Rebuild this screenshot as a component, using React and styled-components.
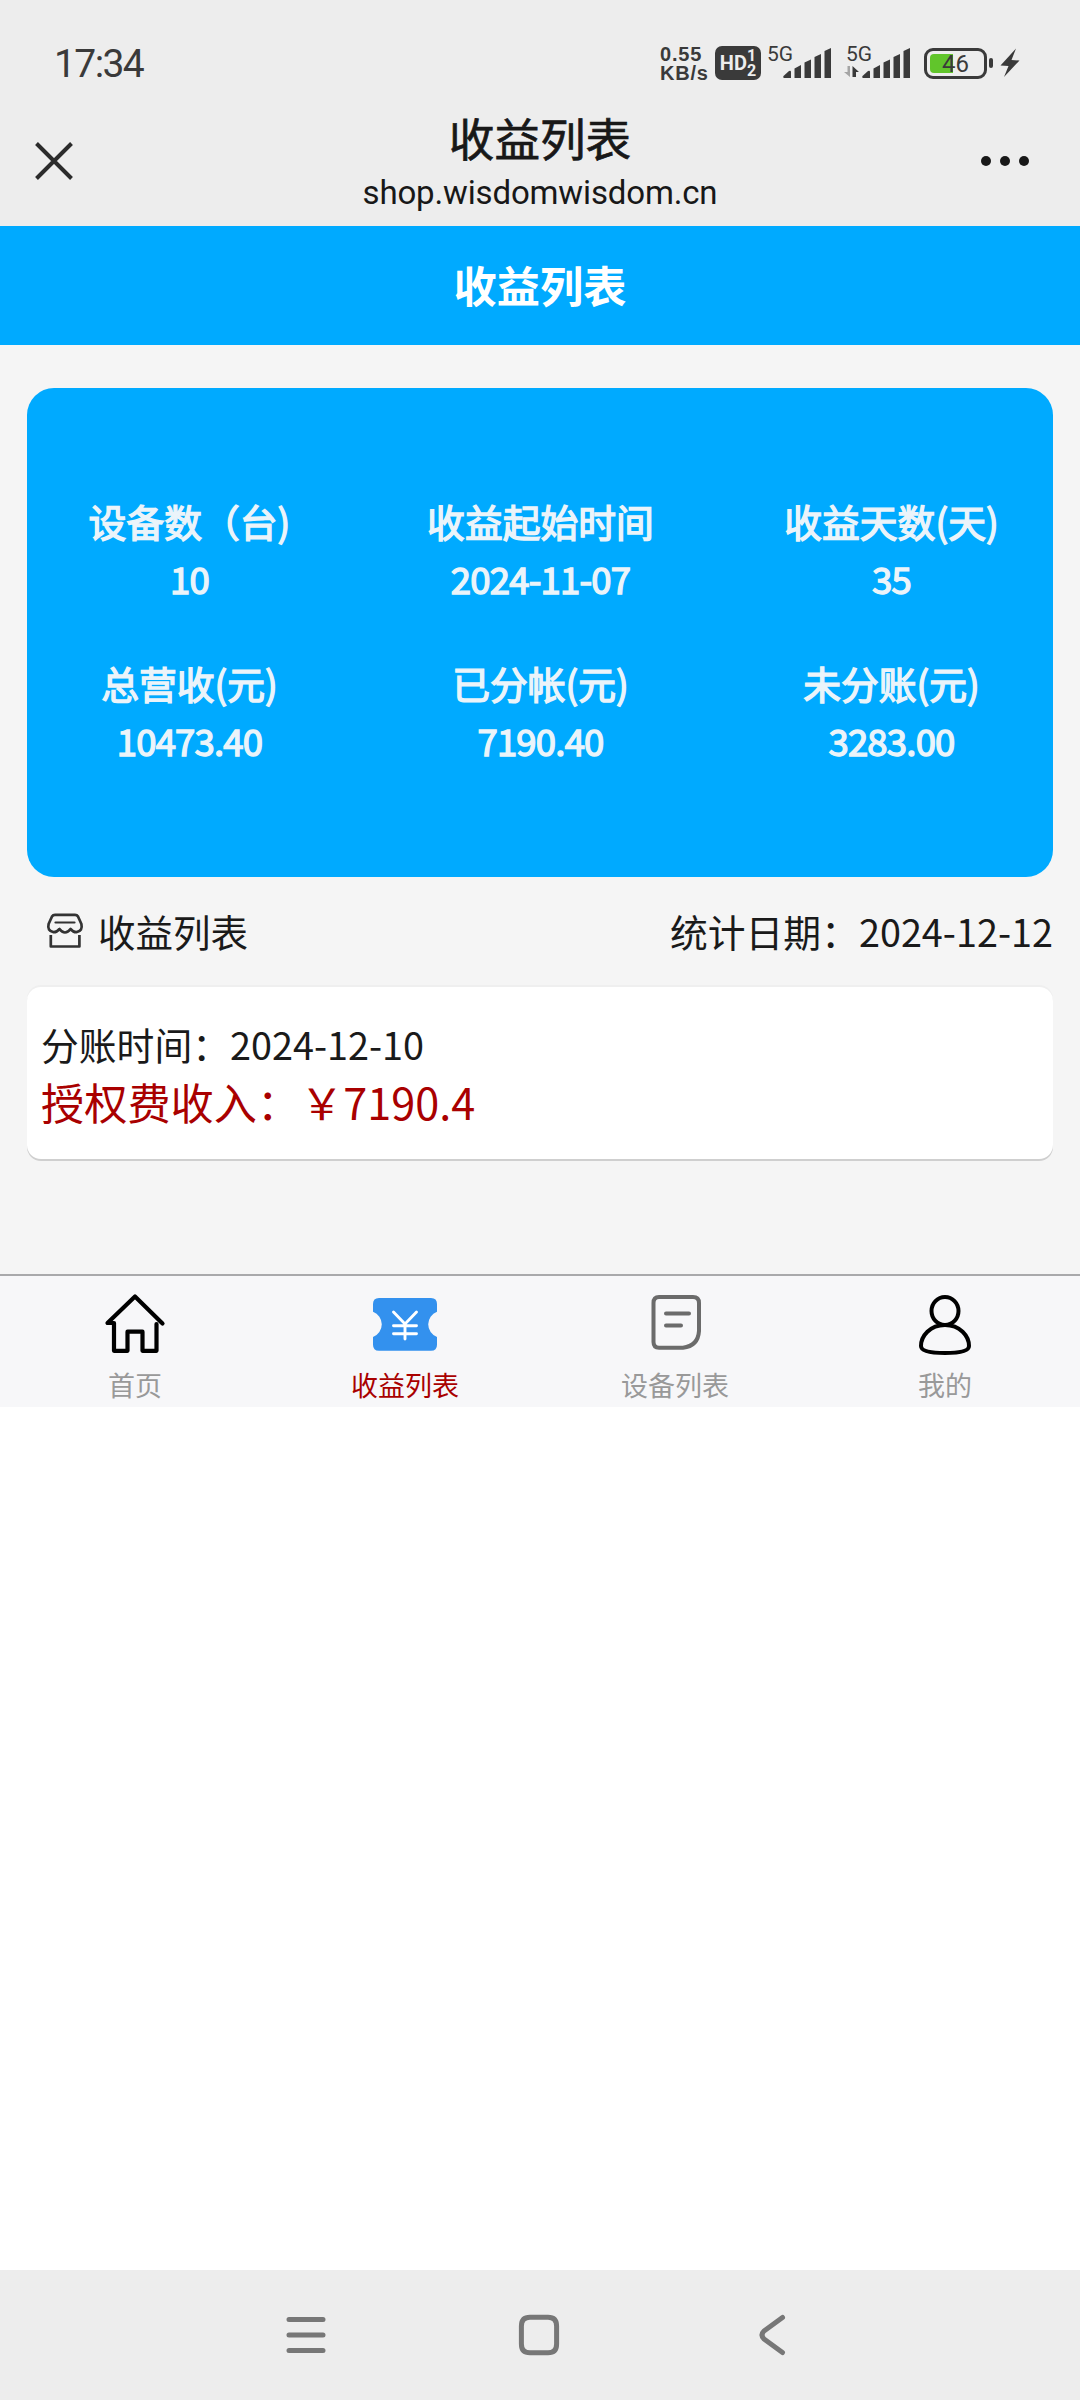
import styled, { createGlobalStyle, css } from 'styled-components';

const STATS = [
  { label: '设备数（台)', value: '10' },
  { label: '收益起始时间', value: '2024-11-07' },
  { label: '收益天数(天)', value: '35' },
  { label: '总营收(元)', value: '10473.40' },
  { label: '已分帐(元)', value: '7190.40' },
  { label: '未分账(元)', value: '3283.00' },
];

const RECORDS = [{ date: '2024-12-10', amount: '7190.4' }];

const TABS = [
  { name: '首页', Icon: HomeIcon },
  { name: '收益列表', Icon: TicketIcon, active: true },
  { name: '设备列表', Icon: DocIcon },
  { name: '我的', Icon: UserIcon },
];

function App() {
  return (
    <StPhone>
      <GlobalStyle />
      <StStatusBar>
        <StClock>17:34</StClock>
        <StStatusIcons>
          <StSpeed>
            <span>0.55</span>
            <span>KB/s</span>
          </StSpeed>
          <StHdBadge>
            HD
            <StHdNumbers>
              <span>1</span>
              <span>2</span>
            </StHdNumbers>
          </StHdBadge>
          <StSignal $left={4}>
            <StNetwork>5G</StNetwork>
            <SignalBars />
          </StSignal>
          <StSignal $left={13}>
            <StNetwork>5G</StNetwork>
            <SignalBars arrows />
          </StSignal>
          <StBattery>
            <StBatteryLevel />
            <StBatteryText>46</StBatteryText>
          </StBattery>
          <StBatteryTip />
          <svg width="20" height="30" viewBox="0 0 20 30">
            <path d="M16 0.5 L0.5 17.5 L8.5 18 L4 29 L19.5 12.5 L11.5 12 Z" fill="#3a3a3a" />
          </svg>
        </StStatusIcons>
      </StStatusBar>

      <StTitleBar>
        <svg width="38" height="38" viewBox="0 0 38 38">
          <path d="M1.5 1.5 L36.5 36.5 M36.5 1.5 L1.5 36.5" stroke="#2b2b2b" strokeWidth="4" />
        </svg>
        <StTitleText>
          <StTitle>收益列表</StTitle>
          <StUrl>shop.wisdomwisdom.cn</StUrl>
        </StTitleText>
        <StMore>
          <i />
          <i />
          <i />
        </StMore>
      </StTitleBar>

      <StPage>
        <StPageHeader>收益列表</StPageHeader>
        <StSummary>
          {STATS.map(({ label, value }) => (
            <StStat key={label}>
              <StStatLabel>{label}</StStatLabel>
              <StStatValue>{value}</StStatValue>
            </StStat>
          ))}
        </StSummary>
        <StListHeader>
          <StListTitle>
            <ShopIcon />
            收益列表
          </StListTitle>
          <span>统计日期：2024-12-12</span>
        </StListHeader>
        {RECORDS.map(({ date, amount }) => (
          <StRecord key={date}>
            <StRecordDate>分账时间：{date}</StRecordDate>
            <StRecordAmount>授权费收入：￥{amount}</StRecordAmount>
          </StRecord>
        ))}
        <StTabBar>
          {TABS.map(({ name, Icon, active }) => (
            <StTab key={name} $active={active}>
              <Icon />
              <span>{name}</span>
            </StTab>
          ))}
        </StTabBar>
      </StPage>

      <StNavBar>
        <svg width="40" height="42" viewBox="0 0 40 42">
          <path d="M3 5.4 H37 M3 21 H37 M3 36.4 H37" {...navStroke} />
        </svg>
        <svg width="42" height="42" viewBox="0 0 42 42">
          <path
            d="M12 3.2 H30 Q38.6 3.2 38.6 12 V30 Q38.6 38.8 30 38.8 H12 Q3.4 38.8 3.4 30 V12 Q3.4 3.2 12 3.2 Z"
            {...navStroke}
          />
        </svg>
        <svg width="28" height="42" viewBox="0 0 28 42">
          <path d="M24.5 3.5 L6 17 Q2 21 6 25 L24.5 38.5" {...navStroke} />
        </svg>
      </StNavBar>
    </StPhone>
  );
}

export default App;

const navStroke = {
  fill: 'none',
  stroke: '#777777',
  strokeWidth: 5,
  strokeLinecap: 'round',
  strokeLinejoin: 'round',
};

function SignalBars({ arrows }) {
  return (
    <svg width="66" height="32" viewBox="0 0 66 32">
      {arrows && (
        <>
          <path d="M6 19 V30 L0 25 H3.5 V19 Z" fill="#a5a5a5" />
          <path d="M8.5 30 V19 L15 25 H12 V30 Z" fill="#3a3a3a" />
        </>
      )}
      <g fill="#3a3a3a">
        <path d="M18.5 29 L24 24 Q26 23 26 25 V31 H19 Q17.5 30.5 18.5 29 Z" />
        <path d="M29.5 21.5 L36 18 V31 H29.5 Z" />
        <path d="M39.5 15.5 L46 12.5 V31 H39.5 Z" />
        <path d="M49.5 10 L56 7 V31 H49.5 Z" />
        <path d="M59.5 4 L66 1 V31 H59.5 Z" />
      </g>
    </svg>
  );
}

function ShopIcon() {
  return (
    <svg width="38" height="36" viewBox="0 0 38 36" fill="none" stroke="#333" strokeWidth="2.7">
      <path
        d="M9 1.8 H29 Q31 1.8 32 3.5 L35.4 11 Q37 18 30.5 19.2 Q27.5 19.5 24.5 16 Q22 19.5 19 19.5 Q16 19.5 13.5 16 Q10.5 19.5 7.5 19.2 Q1 18 2.6 11 L6 3.5 Q7 1.8 9 1.8 Z"
        strokeLinejoin="round"
      />
      <path d="M9.5 9.5 H28.5" strokeLinecap="round" strokeWidth="2.2" />
      <path d="M4.8 22 V33.5 H33.4 V22" strokeLinejoin="round" />
    </svg>
  );
}

function HomeIcon() {
  return (
    <svg width="62" height="62" viewBox="0 0 62 62">
      <path
        d="M58.5 30.5 L31 3.5 L3.5 30 H10 V57.8 H23.5 V38.7 H38.5 V57.8 H52.5 V31"
        fill="none"
        stroke="#000"
        strokeWidth="4.2"
        strokeLinecap="round"
        strokeLinejoin="round"
      />
    </svg>
  );
}

function TicketIcon() {
  return (
    <svg width="64" height="62" viewBox="0 0 64 62">
      <path
        d="M6 5 H58 Q64 5 64 11 V18.7 A13.5 13.5 0 0 0 64 44 V51.7 Q64 57.7 58 57.7 H6 Q0 57.7 0 51.7 V44 A13.5 13.5 0 0 0 0 18.7 V11 Q0 5 6 5 Z"
        fill="#3391ee"
      />
      <path
        d="M20.5 19 L32 31 L43.5 19 M20.5 32.7 H43.5 M20.5 40.7 H43.5 M32 31 V46"
        fill="none"
        stroke="#fff"
        strokeWidth="2.9"
        strokeLinecap="round"
      />
    </svg>
  );
}

function DocIcon() {
  return (
    <svg width="52" height="62" viewBox="0 0 52 62" fill="none" stroke="#6b6b6b" strokeWidth="4" strokeLinecap="round">
      <path d="M10 4 H44 Q50 4 50 10 V38 Q49 53 34 54.7 H10 Q4.5 54.7 4.5 49 V10 Q4.5 4 10 4 Z" />
      <path d="M17 20.5 H40 M17 32.5 H32" />
    </svg>
  );
}

function UserIcon() {
  return (
    <svg width="54" height="62" viewBox="0 0 54 62" fill="none" stroke="#000" strokeWidth="4">
      <ellipse cx="27" cy="18" rx="13.5" ry="14" />
      <path d="M27 32 C42 32 51 43 51 53 Q51 60 27 60 Q3 60 3 53 C3 43 12 32 27 32 Z" />
    </svg>
  );
}

const GlobalStyle = createGlobalStyle`
  * {
    box-sizing: border-box;
  }
  body {
    margin: 0;
    background: #fff;
    font-family: 'Noto Sans CJK SC', sans-serif;
  }
  svg {
    display: block;
    flex-shrink: 0;
  }
`;

const systemFont = css`
  font-family: Roboto, 'Noto Sans CJK SC', sans-serif;
`;

const StPhone = styled.div`
  display: flex;
  flex-direction: column;
  width: 1080px;
  height: 2400px;
  overflow: hidden;
`;

const StStatusBar = styled.div`
  ${systemFont}
  display: flex;
  align-items: center;
  justify-content: space-between;
  height: 100px;
  padding: 26px 60px 0 54px;
  background: #ededed;
  color: #3a3a3a;
`;

const StClock = styled.span`
  padding-top: 2px;
  font-size: 39px;
  letter-spacing: -1.6px;
`;

const StStatusIcons = styled.div`
  display: flex;
  align-items: center;
`;

const StSpeed = styled.div`
  display: flex;
  flex-direction: column;
  width: 55px;
  padding-top: 2px;
  font-family: 'Liberation Sans', sans-serif;
  font-size: 20px;
  font-weight: 700;
  line-height: 19px;
  letter-spacing: 0.8px;
`;

const StHdBadge = styled.div`
  display: flex;
  align-items: center;
  justify-content: center;
  width: 46px;
  height: 34px;
  border-radius: 7px;
  background: #3a3a3a;
  color: #ededed;
  font-size: 20px;
  font-weight: 700;
`;

const StHdNumbers = styled.div`
  display: flex;
  flex-direction: column;
  font-size: 16px;
  line-height: 15px;
`;

const StSignal = styled.div`
  position: relative;
  margin-left: ${(props) => props.$left}px;
`;

const StNetwork = styled.span`
  position: absolute;
  top: -3px;
  left: 2px;
  font-size: 21px;
  line-height: 20px;
`;

const StBattery = styled.div`
  position: relative;
  width: 63px;
  height: 31px;
  margin-left: 14px;
  padding: 3px;
  border: 3px solid #3a3a3a;
  border-radius: 9px;
`;

const StBatteryLevel = styled.div`
  width: 23px;
  height: 19px;
  border-radius: 4px 0 0 4px;
  background: #61c52b;
`;

const StBatteryText = styled.span`
  position: absolute;
  inset: 0;
  font-size: 24px;
  line-height: 26px;
  text-align: center;
`;

const StBatteryTip = styled.div`
  width: 4px;
  height: 10px;
  margin: 0 7px 0 2px;
  border-radius: 2px;
  background: #3a3a3a;
`;

const StTitleBar = styled.div`
  display: grid;
  grid-template-columns: 1fr auto 1fr;
  align-items: center;
  height: 126px;
  padding: 0 51px 4px 35px;
  background: #ededed;
  color: #181818;
`;

const StTitleText = styled.div`
  display: flex;
  flex-direction: column;
  align-items: center;
  padding: 10px 0 0 16px;
`;

const StTitle = styled.div`
  font-size: 45.6px;
  line-height: 52px;
  -webkit-text-stroke: 0.7px #181818;
`;

const StUrl = styled.div`
  ${systemFont}
  padding-top: 2px;
  font-size: 33px;
  line-height: 56px;
  letter-spacing: -0.15px;
`;

const StMore = styled.div`
  display: flex;
  justify-content: flex-end;
  gap: 9px;
  i {
    width: 10px;
    height: 10px;
    border-radius: 50%;
    background: #181818;
  }
`;

const StPage = styled.main`
  display: flex;
  flex-direction: column;
  background: #f5f5f5;
`;

const StPageHeader = styled.h1`
  display: flex;
  align-items: center;
  justify-content: center;
  height: 119px;
  margin: 0;
  padding-bottom: 4px;
  background: #00aaff;
  color: #fff;
  font-size: 43.2px;
  font-weight: 700;
`;

const StSummary = styled.section`
  display: grid;
  grid-template-columns: 324px 378px 324px;
  grid-auto-rows: 162px;
  height: 489px;
  margin: 43px 27px 0;
  padding-top: 104px;
  border-radius: 27px;
  background: #00aaff;
  color: #ebf4fa;
`;

const StStat = styled.div`
  display: flex;
  flex-direction: column;
  align-items: center;
  font-size: 37.8px;
  line-height: 58px;
  -webkit-text-stroke: 1.4px #ebf4fa;
`;

const StStatLabel = styled.span`
  padding-left: 1px;
  white-space: nowrap;
`;

const StStatValue = styled.span`
  padding-left: 1px;
  font-size: 36.5px;
  letter-spacing: -0.8px;
`;

const StListHeader = styled.div`
  display: flex;
  align-items: center;
  justify-content: space-between;
  height: 110px;
  padding: 0 27px 3px 46px;
  color: #1a1a1a;
  font-size: 37.8px;
`;

const StListTitle = styled.div`
  display: flex;
  align-items: center;
  gap: 14px;
  font-size: 37.5px;
`;

const StRecord = styled.article`
  height: 172px;
  margin: 0 27px;
  padding: 29px 14px 0;
  border-radius: 14px;
  background: #fff;
  box-shadow: 0 2px 0 #cfcfcf, 0 -2px 0 #efefef;
`;

const StRecordDate = styled.div`
  color: #1a1a1a;
  font-size: 37.8px;
  line-height: 56px;
`;

const StRecordAmount = styled.div`
  color: #a90000;
  font-size: 43.2px;
  line-height: 59px;
`;

const StTabBar = styled.nav`
  display: grid;
  grid-template-columns: repeat(4, 1fr);
  height: 133px;
  margin-top: 115px;
  border-top: 2px solid #a9a9ab;
  background: #f7f7f9;
`;

const StTab = styled.div`
  display: flex;
  flex-direction: column;
  align-items: center;
  gap: 10px;
  padding-top: 17px;
  color: ${(props) => (props.$active ? '#a90000' : '#999')};
  font-size: 27px;
  line-height: 40px;
`;

const StNavBar = styled.footer`
  display: grid;
  grid-template-columns: repeat(3, 233px);
  align-items: center;
  justify-content: center;
  justify-items: center;
  height: 130px;
  margin-top: auto;
  padding-right: 2px;
  background: #ededed;
`;
